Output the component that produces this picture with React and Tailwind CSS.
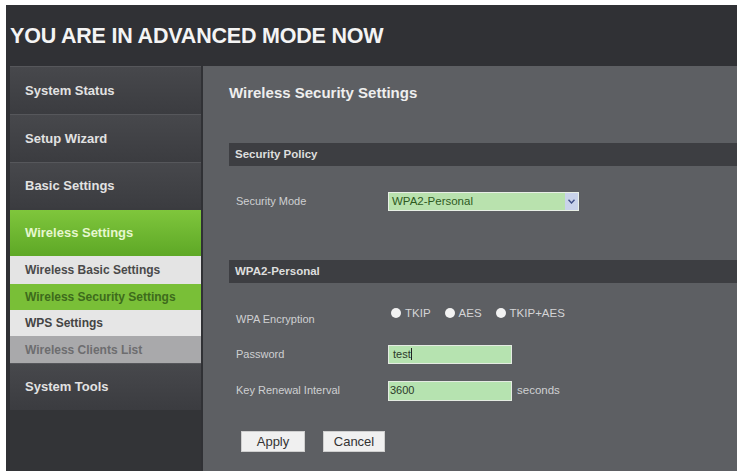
import React from 'react'

const FONT = { fontFamily: '"Liberation Sans", Arial, sans-serif' }

const SUB_MENU = [
  { label: 'Wireless Basic Settings',    cls: 'bg-[#e4e4e4] text-[#4a4a4a] h-[28px]' },
  { label: 'Wireless Security Settings', cls: 'bg-[#79bf37] text-[#3d6b1c] h-[26px]' },
  { label: 'WPS Settings',               cls: 'bg-[#e6e6e6] text-[#444] h-[26px]' },
  { label: 'Wireless Clients List',      cls: 'bg-[#a9a9ab] text-[#6d6d6f] h-[27px]' },
]

function MenuItem({ label, h = 'h-[48px]' }) {
  return (
    <div className={`${h} flex items-center pl-[15px] border-t border-[#56575b] bg-gradient-to-b from-[#47484c] to-[#3b3c40] text-[13px] font-bold text-[#e2e2e2]`}>
      {label}
    </div>
  )
}

function SectionBar({ children }) {
  return (
    <div className="h-[23px] flex items-center pl-[6px] bg-[#3d3e42] text-[11.5px] font-bold text-[#dedede]">
      {children}
    </div>
  )
}

function Row({ label, children, className = '' }) {
  return (
    <div className={`flex items-center pl-[7px] ${className}`}>
      <div className="w-[152px] text-[11px] text-[#cfd0d2]">{label}</div>
      {children}
    </div>
  )
}

function Radio({ label }) {
  return (
    <div className="flex items-center gap-[4px] mr-[14px]">
      <span className="w-[10px] h-[10px] rounded-full bg-[#f2f2f2]" />
      <span className="text-[11.5px] text-[#d4d4d6]">{label}</span>
    </div>
  )
}

export default function App() {
  return (
    <div className="w-[740px] h-[471px] bg-white pt-[5px] pl-[6px] pr-[3px] overflow-hidden" style={FONT}>
      <div className="h-full flex flex-col bg-[#303135]">

        {/* Header */}
        <div className="h-[61px] flex items-center pl-[4px] pt-[2px] text-[21.5px] font-bold text-[#f4f4f4] tracking-[-0.2px]">
          YOU ARE IN ADVANCED MODE NOW
        </div>

        <div className="flex-1 flex">

          {/* Sidebar */}
          <div className="w-[191px] ml-[4px] flex flex-col bg-[#333438]">
            <MenuItem label="System Status" h="h-[48px]" />
            <MenuItem label="Setup Wizard" h="h-[48px]" />
            <MenuItem label="Basic Settings" h="h-[46px]" />
            <div className="h-[48px] flex items-center pl-[15px] border-t-2 border-[#3a3b3f] bg-gradient-to-b from-[#7fc63c] to-[#5ea826] text-[13px] font-bold text-[#e6f7cf]">
              Wireless Settings
            </div>
            {SUB_MENU.map(s => (
              <div key={s.label} className={`${s.cls} flex items-center pl-[15px] text-[12px] font-bold`}>
                {s.label}
              </div>
            ))}
            <MenuItem label="System Tools" h="h-[47px]" />
            <div className="flex-1 bg-[#333437]" />
          </div>

          {/* Main */}
          <div className="flex-1 ml-[2px] bg-[#5d5f63] pl-[26px] flex flex-col">
            <div className="h-[53px] flex items-center pt-[1px] text-[15px] font-bold text-[#eeeeee]">
              Wireless Security Settings
            </div>

            <div className="mt-[24px]">
              <SectionBar>Security Policy</SectionBar>
            </div>

            <Row label="Security Mode" className="mt-[26px]">
              <div className="w-[191px] h-[19px] flex border border-[#e8efe6] bg-[#b9e2ae]">
                <div className="flex-1 flex items-center pl-[3px] text-[11.5px] text-[#2e5a1e]">WPA2-Personal</div>
                <div className="w-[13px] flex items-center justify-center bg-[#c9d3ea]">
                  <svg width="7" height="5" viewBox="0 0 7 5"><path d="M0.5 0.8 L3.5 4 L6.5 0.8" fill="none" stroke="#3e4f86" strokeWidth="1.4" /></svg>
                </div>
              </div>
            </Row>

            <div className="mt-[49px]">
              <SectionBar>WPA2-Personal</SectionBar>
            </div>

            <Row label="WPA Encryption" className="mt-[28px]">
              <div className="flex items-center -mt-[12px] ml-[3px]">
                <Radio label="TKIP" />
                <Radio label="AES" />
                <Radio label="TKIP+AES" />
              </div>
            </Row>

            <Row label="Password" className="mt-[17px]">
              <div className="w-[124px] h-[19px] flex items-center pl-[4px] border border-[#e4ebe2] bg-[#b6e3b0] text-[11px] text-[#2c3a2a]">
                test<span className="w-px h-[12px] bg-[#222]" />
              </div>
            </Row>

            <Row label="Key Renewal Interval" className="mt-[17px]">
              <div className="w-[124px] h-[20px] flex items-center pl-[1px] border border-[#e4ebe2] bg-[#b6e3b0] text-[11px] text-[#2c3a2a]">
                3600
              </div>
              <span className="ml-[5px] text-[11.5px] text-[#cfd0d2]">seconds</span>
            </Row>

            <div className="flex gap-[18px] mt-[30px] ml-[12px]">
              <button className="w-[64px] h-[21px] bg-[#f0f0f0] border border-[#cfcfcf] text-[13px] text-[#333]">Apply</button>
              <button className="w-[62px] h-[21px] bg-[#f0f0f0] border border-[#cfcfcf] text-[13px] text-[#333]">Cancel</button>
            </div>
          </div>

        </div>
      </div>
    </div>
  )
}
